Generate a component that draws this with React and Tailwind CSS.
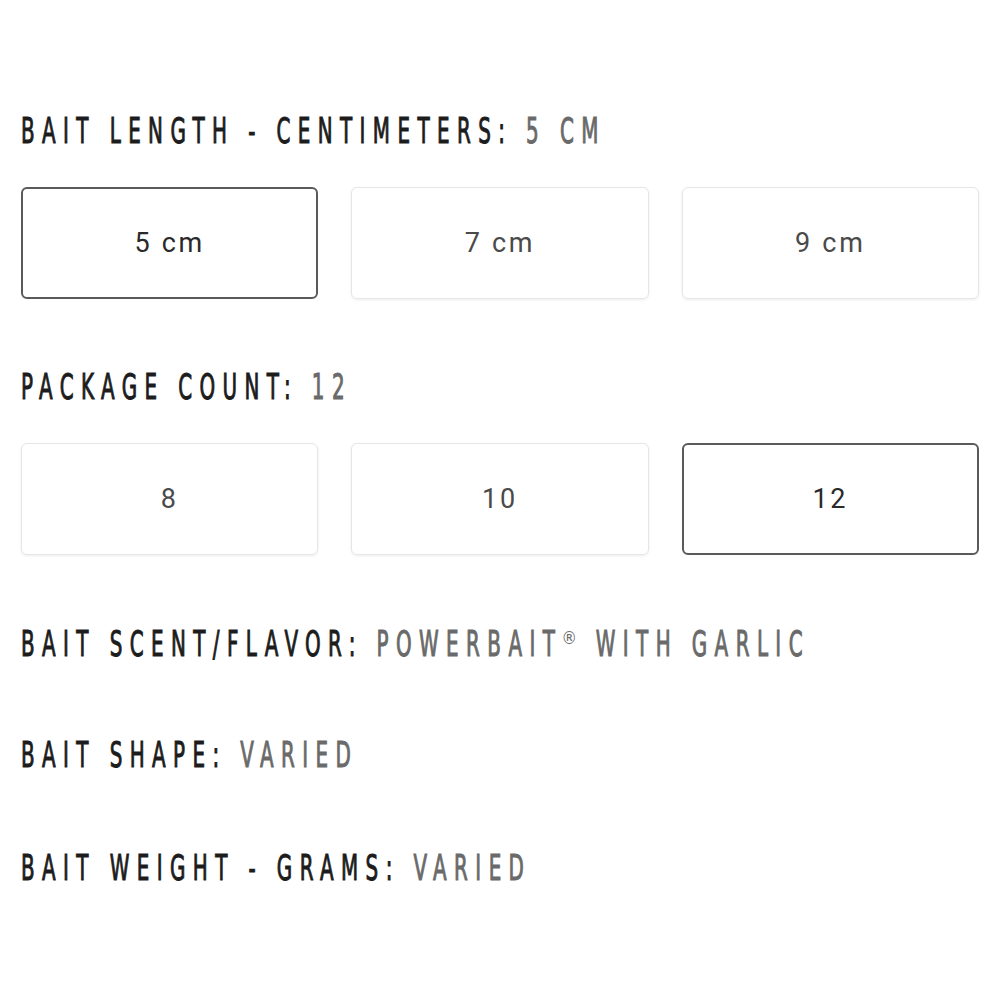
const hf = {
  fontFamily: '"DejaVu Sans Condensed", "DejaVu Sans", sans-serif',
  fontStretch: "condensed",
};

function Heading({ label, value, className = "", children }) {
  return (
    <div className={"h-[35px] overflow-visible " + className}>
      <span
        className="inline-block whitespace-nowrap origin-left scale-x-[0.632] text-[35px] leading-[35px] font-normal tracking-[0.335em] text-[#1c1c1c] [-webkit-text-stroke:1px_currentColor]"
        style={hf}
      >
        {label}: <span className="text-[#6a6a6a]">{value}{children}</span>
      </span>
    </div>
  );
}

function Box({ label, sel }) {
  return (
    <div
      className={
        "h-[112px] flex items-center justify-center rounded-[6px] text-[27px] tracking-[0.1em] " +
        (sel
          ? "border-2 border-[#5a5a5a] text-[#2a2a2a]"
          : "border border-[#e6e6e6] shadow-[0_1px_3px_rgba(0,0,0,0.08)] text-[#4a4a4a]")
      }
      style={{ fontFamily: 'Roboto, "Liberation Sans", sans-serif' }}
    >
      {label}
    </div>
  );
}

export default function App() {
  return (
    <div className="w-[1000px] h-[1000px] overflow-hidden bg-white px-[21px] pt-[114px]">
      <Heading label="BAIT LENGTH - CENTIMETERS" value="5 CM" />
      <div className="grid grid-cols-3 gap-[33px] mt-[38px]">
        <Box label="5 cm" sel />
        <Box label="7 cm" />
        <Box label="9 cm" />
      </div>
      <Heading label="PACKAGE COUNT" value="12" className="mt-[71px]" />
      <div className="grid grid-cols-3 gap-[33px] mt-[38px]">
        <Box label="8" />
        <Box label="10" />
        <Box label="12" sel />
      </div>
      <Heading label="BAIT SCENT/FLAVOR" value="POWERBAIT" className="mt-[72px]">
        <span className="inline-block align-top text-[17px] leading-none tracking-normal scale-x-[1.6] mt-[3px] ml-[4px] mr-[12px] [-webkit-text-stroke:0px]">®</span>
        {" WITH GARLIC"}
      </Heading>
      <Heading label="BAIT SHAPE" value="VARIED" className="mt-[76px]" />
      <Heading label="BAIT WEIGHT - GRAMS" value="VARIED" className="mt-[78px]" />
    </div>
  );
}
